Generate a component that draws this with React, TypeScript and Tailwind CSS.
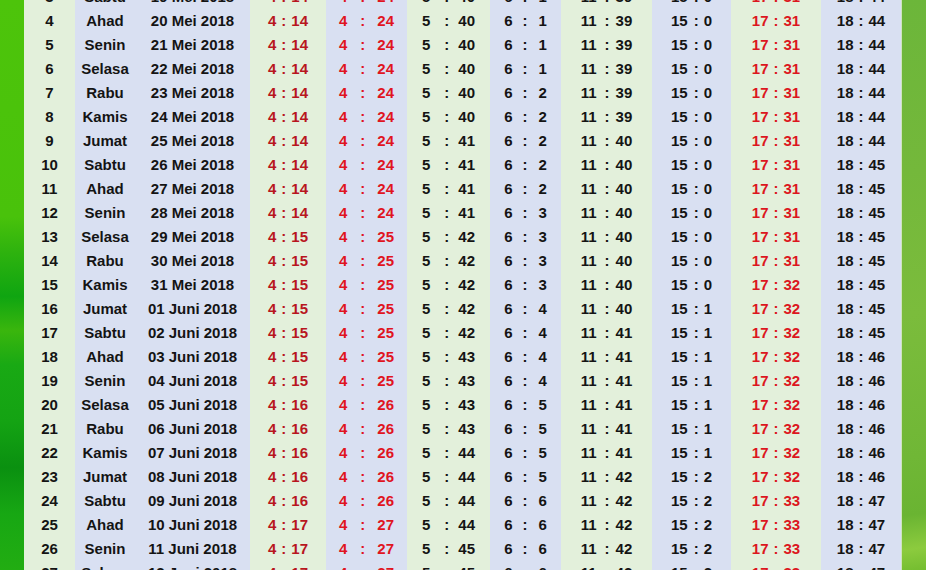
import * as React from "react"

// Jadwal imsakiyah: one row per day
type Row = {
  no: number
  day: string
  date: string
  times: [string, string][]
}

const raw: string[] = [
  "3|Sabtu|19 Mei 2018|4:14|4:24|5:40|6:1|11:39|15:0|17:31|18:44",
  "4|Ahad|20 Mei 2018|4:14|4:24|5:40|6:1|11:39|15:0|17:31|18:44",
  "5|Senin|21 Mei 2018|4:14|4:24|5:40|6:1|11:39|15:0|17:31|18:44",
  "6|Selasa|22 Mei 2018|4:14|4:24|5:40|6:1|11:39|15:0|17:31|18:44",
  "7|Rabu|23 Mei 2018|4:14|4:24|5:40|6:2|11:39|15:0|17:31|18:44",
  "8|Kamis|24 Mei 2018|4:14|4:24|5:40|6:2|11:39|15:0|17:31|18:44",
  "9|Jumat|25 Mei 2018|4:14|4:24|5:41|6:2|11:40|15:0|17:31|18:44",
  "10|Sabtu|26 Mei 2018|4:14|4:24|5:41|6:2|11:40|15:0|17:31|18:45",
  "11|Ahad|27 Mei 2018|4:14|4:24|5:41|6:2|11:40|15:0|17:31|18:45",
  "12|Senin|28 Mei 2018|4:14|4:24|5:41|6:3|11:40|15:0|17:31|18:45",
  "13|Selasa|29 Mei 2018|4:15|4:25|5:42|6:3|11:40|15:0|17:31|18:45",
  "14|Rabu|30 Mei 2018|4:15|4:25|5:42|6:3|11:40|15:0|17:31|18:45",
  "15|Kamis|31 Mei 2018|4:15|4:25|5:42|6:3|11:40|15:0|17:32|18:45",
  "16|Jumat|01 Juni 2018|4:15|4:25|5:42|6:4|11:40|15:1|17:32|18:45",
  "17|Sabtu|02 Juni 2018|4:15|4:25|5:42|6:4|11:41|15:1|17:32|18:45",
  "18|Ahad|03 Juni 2018|4:15|4:25|5:43|6:4|11:41|15:1|17:32|18:46",
  "19|Senin|04 Juni 2018|4:15|4:25|5:43|6:4|11:41|15:1|17:32|18:46",
  "20|Selasa|05 Juni 2018|4:16|4:26|5:43|6:5|11:41|15:1|17:32|18:46",
  "21|Rabu|06 Juni 2018|4:16|4:26|5:43|6:5|11:41|15:1|17:32|18:46",
  "22|Kamis|07 Juni 2018|4:16|4:26|5:44|6:5|11:41|15:1|17:32|18:46",
  "23|Jumat|08 Juni 2018|4:16|4:26|5:44|6:5|11:42|15:2|17:32|18:46",
  "24|Sabtu|09 Juni 2018|4:16|4:26|5:44|6:6|11:42|15:2|17:33|18:47",
  "25|Ahad|10 Juni 2018|4:17|4:27|5:44|6:6|11:42|15:2|17:33|18:47",
  "26|Senin|11 Juni 2018|4:17|4:27|5:45|6:6|11:42|15:2|17:33|18:47",
  "27|Selasa|12 Juni 2018|4:17|4:27|5:45|6:6|11:42|15:2|17:33|18:47",
]

const rows: Row[] = raw.map((line) => {
  const [no, day, date, ...t] = line.split("|")
  return {
    no: Number(no),
    day,
    date,
    times: t.map((s) => s.split(":") as [string, string]),
  }
})

const GREEN = "bg-[#e3f0db]"
const BLUE = "bg-[#d9e0f2]"

// per time column: width, background, text colour, spacing around the colon
const timeCols = [
  { w: "w-[76px]", bg: GREEN, color: "text-[#b8161e]", colon: "mx-[5px]" },
  { w: "w-[81px]", bg: BLUE, color: "text-[#e0141f]", colon: "ml-[13px] mr-[12px]" },
  { w: "w-[83px]", bg: GREEN, color: "text-[#141414]", colon: "ml-[14px] mr-[9px]" },
  { w: "w-[71px]", bg: BLUE, color: "text-[#141414]", colon: "ml-[10px] mr-[11px]" },
  { w: "w-[91px]", bg: GREEN, color: "text-[#141414]", colon: "ml-[8px] mr-[6px]" },
  { w: "w-[79px]", bg: BLUE, color: "text-[#141414]", colon: "ml-[6px] mr-[5px]" },
  { w: "w-[90px]", bg: GREEN, color: "text-[#dc1620]", colon: "mx-[5px]" },
  { w: "w-[80px]", bg: BLUE, color: "text-[#141414]", colon: "mx-[5px]" },
]

function Cell({ className, children }: { className: string; children: React.ReactNode }) {
  return (
    <div className={`flex h-[24px] shrink-0 items-center justify-center leading-none ${className}`}>
      {children}
    </div>
  )
}

export default function App() {
  return (
    <div
      className="flex h-[570px] w-[926px] overflow-hidden"
      style={{ fontFamily: '"Liberation Sans", Arial, sans-serif' }}
    >
      <div className="w-[24px] shrink-0 bg-[linear-gradient(180deg,#4dc40b_0%,#49c20b_38%,#2fb30e_44%,#0fa511_52%,#3ab60d_58%,#19a914_64%,#14a313_74%,#0a9010_82%,#17a713_90%,#22ad12_100%)]" />

      <div className="-mt-[16px] flex flex-col text-[15px] font-bold text-[#141414]">
        {rows.map((r) => (
          <div key={r.no} className="flex">
            <Cell className={`w-[51px] ${GREEN}`}>{r.no}</Cell>
            <Cell className={`w-[60px] ${BLUE}`}>{r.day}</Cell>
            <Cell className={`w-[115px] ${BLUE}`}>{r.date}</Cell>
            {r.times.map(([h, m], i) => {
              const c = timeCols[i]
              return (
                <Cell key={i} className={`${c.w} ${c.bg} ${c.color}`}>
                  <span>{h}</span>
                  <span className={c.colon}>:</span>
                  <span>{m}</span>
                </Cell>
              )
            })}
          </div>
        ))}
      </div>

      <div className="flex-1 border-l border-[#cfe3c0] bg-[linear-gradient(172deg,#6cb63a_0%,#74b83b_30%,#7bbc3c_55%,#70b736_80%,#6ab432_90%,#8ccb3e_96%,#74bd30_100%)]" />
    </div>
  )
}
